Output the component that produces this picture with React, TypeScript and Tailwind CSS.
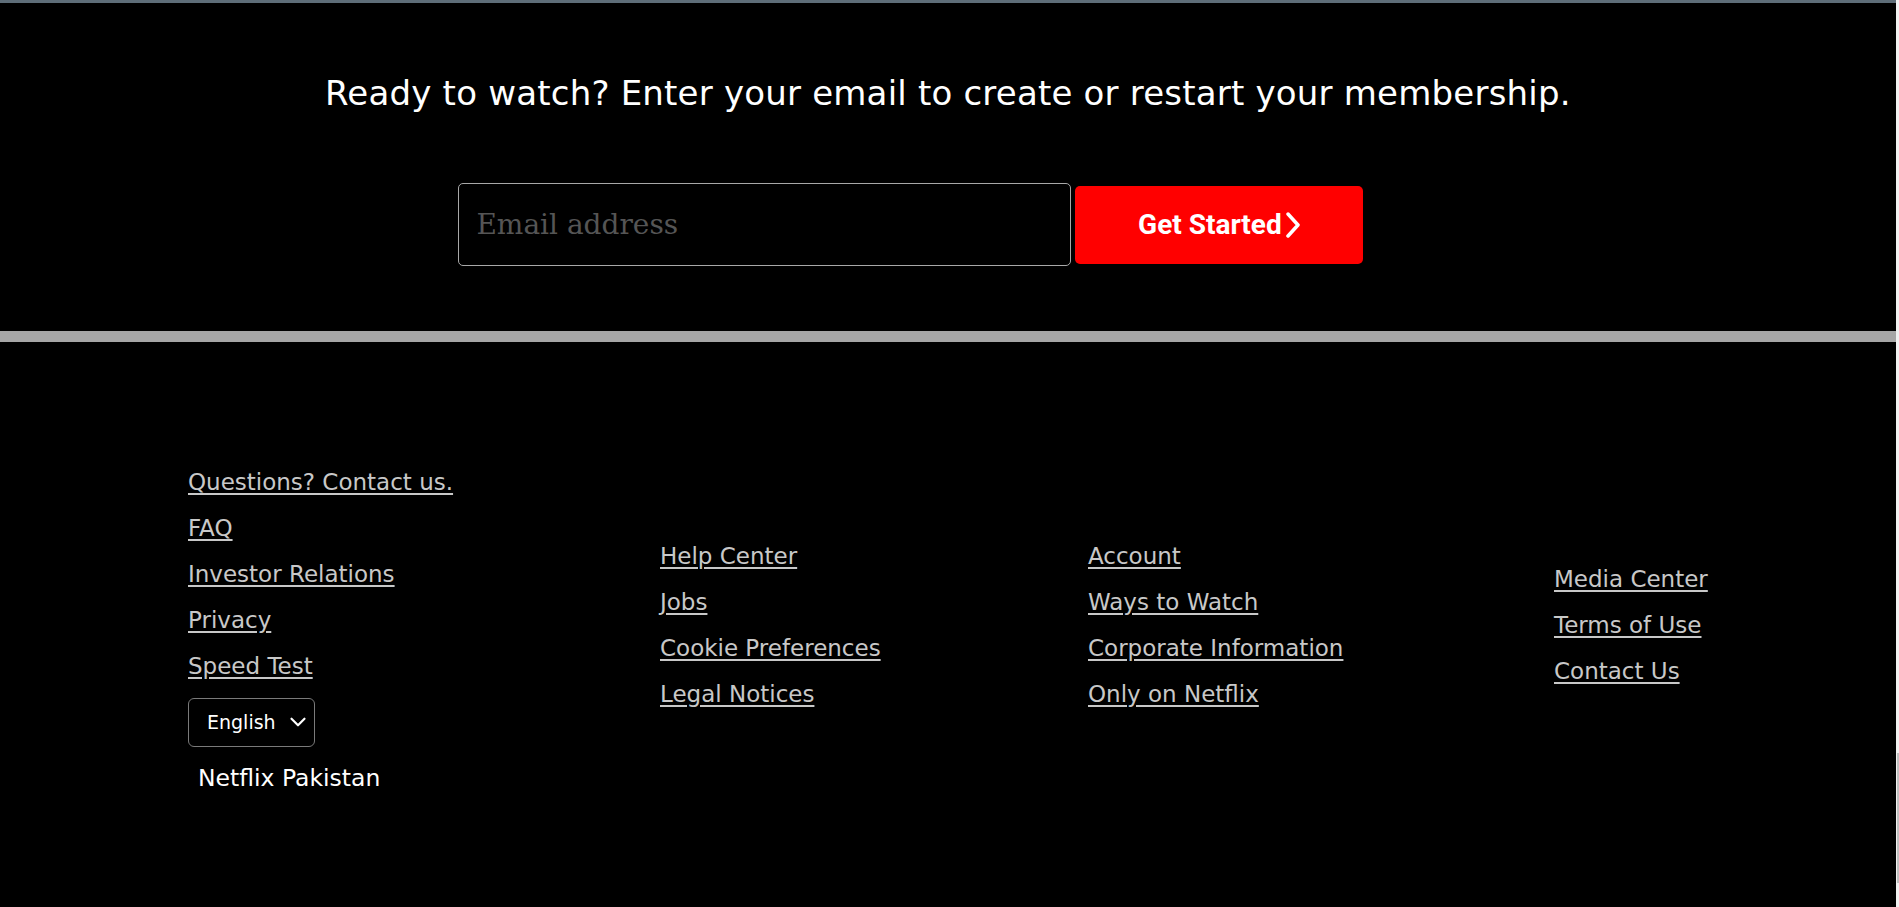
import { ChevronDown } from "lucide-react";

const col1 = ["Questions? Contact us.", "FAQ", "Investor Relations", "Privacy", "Speed Test"];
const col2 = ["Help Center", "Jobs", "Cookie Preferences", "Legal Notices"];
const col3 = ["Account", "Ways to Watch", "Corporate Information", "Only on Netflix"];
const col4 = ["Media Center", "Terms of Use", "Contact Us"];

function FooterLink({ label }: { label: string }) {
  return (
    <a href="#" className="block leading-[46px] text-[23px] text-[#c8c8c8] underline underline-offset-[3px] whitespace-nowrap">
      {label}
    </a>
  );
}

function LinkColumn({ links, width }: { links: string[]; width: string }) {
  return (
    <div className={`flex flex-col items-start ${width}`}>
      {links.map((l) => (
        <FooterLink key={l} label={l} />
      ))}
    </div>
  );
}

export default function App() {
  return (
    <div className="flex h-[907px] w-full overflow-hidden bg-black font-['DejaVu_Sans',sans-serif]">
      <div className="flex flex-1 flex-col">
        <div className="h-[3px] bg-[#5e6d78]" />

        {/* sign up */}
        <section className="flex h-[328px] flex-col items-center pt-[70px]">
          <h3 className="text-[34px] leading-[40px] tracking-[0.2px] text-white">
            Ready to watch? Enter your email to create or restart your membership.
          </h3>
          <form className="mt-[70px] mr-[74px] flex items-center gap-[4px]">
            <input
              type="email"
              placeholder="Email address"
              className="h-[83px] w-[613px] rounded-[5px] border border-[#a8a8a8] bg-black pl-[17px] font-['DejaVu_Serif',serif] text-[28px] text-white placeholder:text-[#555555] outline-none"
            />
            <button
              type="button"
              className="flex h-[78px] w-[288px] items-center justify-center gap-[2px] rounded-[5px] bg-[#ff0000] font-['Roboto',sans-serif] text-[28px] font-bold text-white"
            >
              Get Started
              <svg width="17" height="26" viewBox="0 0 17 26" fill="none">
                <polyline points="4,2 14,13 4,24" stroke="white" strokeWidth="3.5" strokeLinecap="round" strokeLinejoin="round" />
              </svg>
            </button>
          </form>
        </section>

        <div className="h-[11px] bg-[#a6a6a6]" />

        {/* footer */}
        <footer className="flex flex-1 items-center px-[188px]">
          <div className="mt-[6px] flex w-[472px] flex-col items-start">
            {col1.map((l) => (
              <FooterLink key={l} label={l} />
            ))}
            <div className="relative mt-[9px]">
              <select className="h-[49px] w-[127px] appearance-none rounded-[6px] border border-[#7a7a7a] bg-black pl-[18px] text-[19px] text-white outline-none">
                <option>English</option>
                <option>اردو</option>
              </select>
              <ChevronDown className="pointer-events-none absolute right-[4px] top-[11px] text-white" size={26} strokeWidth={2} />
            </div>
            <p className="mt-[14px] ml-[10px] text-[23.5px] text-white">Netflix Pakistan</p>
          </div>
          <LinkColumn links={col2} width="w-[428px]" />
          <LinkColumn links={col3} width="w-[466px]" />
          <LinkColumn links={col4} width="flex-1" />
        </footer>
      </div>

      {/* scrollbar */}
      <div className="flex w-[4px] flex-col bg-[#f1f1f1] pt-[753px]">
        <div className="ml-auto h-[130px] w-[2px] bg-[#c1c1c1]" />
      </div>
    </div>
  );
}
